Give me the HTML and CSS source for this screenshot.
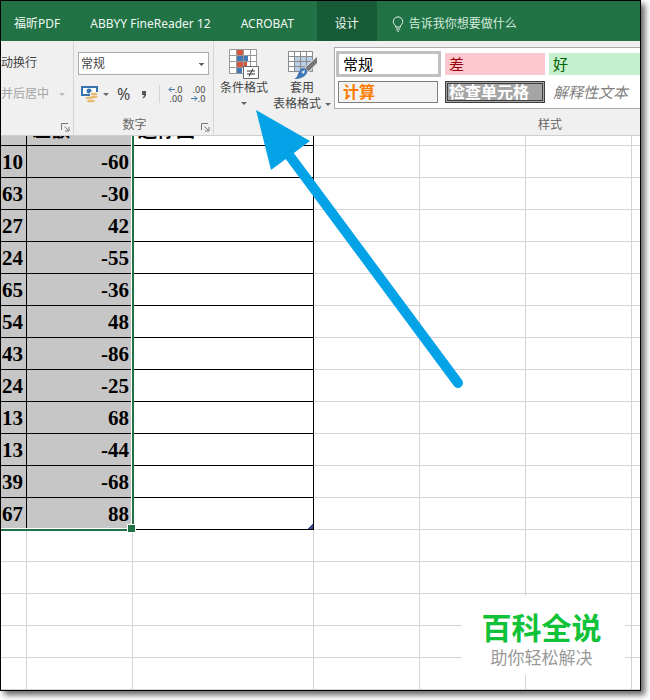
FILE: index.html
```html
<!DOCTYPE html>
<html lang="zh-CN">
<head>
    <meta charset="UTF-8">
    <title>工作簿</title>
    <link rel="stylesheet" href="styles.css">
</head>
<body>
<div class="window">
    <nav class="tabs">
        <a href="#">福昕PDF</a>
        <a href="#">ABBYY FineReader 12</a>
        <a href="#">ACROBAT</a>
        <a href="#" class="active">设计</a>
        <a href="#" class="tell">
            <svg width="12" height="16" viewBox="0 0 12 16" fill="none" stroke="#e6f5ec">
                <path d="M3.500 11V9.500C2 8.500 1.300 7.300 1.300 5.600a4.700 4.700 0 0 1 9.400 0C10.700 7.300 10 8.500 8.500 9.500V11zM3.800 13h4.400M4.800 15h2.400"/>
            </svg>告诉我你想要做什么
        </a>
    </nav>
    <div class="ribbon">
        <section class="group align">
            <button>动换行</button>
            <button class="disabled">并后居中<i class="caret"></i></button>
            <div class="foot"><svg class="launch" viewBox="0 0 9 9"><path d="M.5 7V.5H7M3.500 3.500l4 4M8 4v4H4"/></svg></div>
        </section>
        <section class="group number">
            <select aria-label="数字格式"><option>常规</option></select>
            <div class="tools">
                <button aria-label="会计数字格式">
                    <svg width="18" height="18" viewBox="0 0 18 18">
                        <path d="M1 2h15v8H1z" fill="#fff" stroke="#3a73ad" stroke-width="2"/>
                        <circle cx="8" cy="6" r="2.500" fill="#3a73ad"/>
                        <path d="M9 7h9v10H4v-6h5z" fill="#f0f0f0"/>
                        <g fill="#e9bb72"><ellipse cx="13" cy="9" rx="3.500" ry="1.300"/><ellipse cx="13" cy="12" rx="3.500" ry="1.200"/><ellipse cx="8" cy="13" rx="3.500" ry="1.200"/><ellipse cx="10" cy="16" rx="4" ry="1.300"/></g>
                    </svg><i class="caret"></i>
                </button>
                <button class="percent">%</button>
                <button class="comma" aria-label="千位分隔样式">
                    <svg width="6" height="9" viewBox="0 0 6 9"><path d="M1 1h4v3c0 2-1 3.500-3 4.500L1.500 8C2.500 7 3 6 3 5H1z" fill="#555"/></svg>
                </button>
                <button class="decimal first"><span><svg viewBox="0 0 7 7"><path d="M7 3.500H1M3.500 1L1 3.500 3.500 6"/></svg>.0</span><span>.00</span></button>
                <button class="decimal"><span>.00</span><span><svg viewBox="0 0 7 7"><path d="M0 3.500h6M3.500 1L6 3.500 3.500 6"/></svg>.0</span></button>
            </div>
            <div class="foot">数字<svg class="launch" viewBox="0 0 9 9"><path d="M.5 7V.5H7M3.500 3.500l4 4M8 4v4H4"/></svg></div>
        </section>
        <section class="group styles">
            <div class="row">
                <button class="big">
                    <svg width="32" height="32" viewBox="0 0 32 32">
                        <path d="M1.500 1.500h27v24h-27z" fill="#fff"/>
                        <path d="M9 2h6v5H9zM9 14h10v5H9z" fill="#d2593f"/>
                        <path d="M9 8h11v5H9zM9 20h5v5H9z" fill="#4478b5"/>
                        <path d="M1.500 1.500h27v24h-27zM1.500 7.500h27M1.500 13.500h27M1.500 19.500h27M8.500 1.500v24M15.500 1.500v24M22.500 1.500v24" fill="none" stroke="#999"/>
                        <path d="M15.500 18.500h15v12h-15z" fill="#fff" stroke="#666"/>
                        <path d="M19 23h8M19 26h8M25 20.500l-4 8" stroke="#333" fill="none"/>
                    </svg>
                    <span>条件格式</span><i class="caret"></i>
                </button>
                <button class="big">
                    <svg width="32" height="32" viewBox="0 0 32 32">
                        <path d="M2.500 3.500h24v20h-24z" fill="#fff"/>
                        <path d="M9 9h18v15H9z" fill="#b9cde5"/>
                        <path d="M2.500 3.500h24v20h-24zM2.500 8.500h24M2.500 13.500h24M2.500 18.500h24M8.500 3.500v20M14.500 3.500v20M20.500 3.500v20" fill="none" stroke="#8c8c8c"/>
                        <path d="M31.500 8v7l-9 9-4-4z" fill="#777" stroke="#f0f0f0"/>
                        <path d="M17 20c3 0 5 3 4 5-2 4-7 6-13 6 4-2 3-4 5-7 1-2 2-4 4-4z" fill="#3f78b5"/>
                        <path d="M15 24l4-2-1 4z" fill="#dbe8f5"/>
                    </svg>
                    <span>套用</span><span>表格格式<i class="caret"></i></span>
                </button>
                <div class="gallery">
                    <button class="normal">常规</button>
                    <button class="bad">差</button>
                    <button class="good">好</button>
                    <button class="calc">计算</button>
                    <button class="check">检查单元格</button>
                    <button class="note">解释性文本</button>
                </div>
            </div>
            <div class="foot">样式</div>
        </section>
    </div>
    <div class="sheet">
        <table>
            <colgroup><col class="c1"><col class="c2"><col class="c3"><col class="c2"><col class="c2"><col class="c2"><col></colgroup>
            <tbody class="data">
            <tr><th></th><th>差额</th><th>迷你图</th><td></td><td></td><td></td><td></td></tr>
            <tr><td>10</td><td>-60</td><td></td><td></td><td></td><td></td><td></td></tr>
            <tr><td>63</td><td>-30</td><td></td><td></td><td></td><td></td><td></td></tr>
            <tr><td>27</td><td>42</td><td></td><td></td><td></td><td></td><td></td></tr>
            <tr><td>24</td><td>-55</td><td></td><td></td><td></td><td></td><td></td></tr>
            <tr><td>65</td><td>-36</td><td></td><td></td><td></td><td></td><td></td></tr>
            <tr><td>54</td><td>48</td><td></td><td></td><td></td><td></td><td></td></tr>
            <tr><td>43</td><td>-86</td><td></td><td></td><td></td><td></td><td></td></tr>
            <tr><td>24</td><td>-25</td><td></td><td></td><td></td><td></td><td></td></tr>
            <tr><td>13</td><td>68</td><td></td><td></td><td></td><td></td><td></td></tr>
            <tr><td>13</td><td>-44</td><td></td><td></td><td></td><td></td><td></td></tr>
            <tr><td>39</td><td>-68</td><td></td><td></td><td></td><td></td><td></td></tr>
            <tr><td>67</td><td>88</td><td class="last"></td><td></td><td></td><td></td><td></td></tr>
            </tbody>
            <tbody>
            <tr><td></td><td></td><td></td><td></td><td></td><td></td><td></td></tr>
            <tr><td></td><td></td><td></td><td></td><td></td><td></td><td></td></tr>
            <tr><td></td><td></td><td></td><td></td><td></td><td></td><td></td></tr>
            <tr><td></td><td></td><td></td><td></td><td></td><td></td><td></td></tr>
            <tr><td></td><td></td><td></td><td></td><td></td><td></td><td></td></tr>
            </tbody>
        </table>
        <div class="selection"></div>
        <div class="mark">
            <strong>百科全说</strong>
            <span>助你轻松解决</span>
        </div>
    </div>
    <svg class="arrow" width="210" height="282" viewBox="0 0 210 282">
        <path d="M1 1l54 31-39 29z" fill="#04a2e6"/>
        <path d="M34 46l169 228" stroke="#04a2e6" stroke-width="10" stroke-linecap="round"/>
    </svg>
</div>
</body>
</html>
```
FILE: styles.css
```css
*
{
    box-sizing: border-box;
}
body
{
    margin: 0;
    padding: 0 9px 9px 0;
    background: #fff;
    font: 12px/16px "Noto Sans", "Noto Sans CJK SC", sans-serif;
    color: #444;
}
button
{
    padding: 0;
    border: 0;
    background: none;
    font: inherit;
    color: inherit;
}
.window
{
    position: relative;
    border: 1px solid #000;
    background: #fff;
    box-shadow: 4px 4px 6px rgba(0, 0, 0, .6);
}

/* tabs */
.tabs
{
    display: flex;
    height: 40px;
    background: #217346;
    white-space: nowrap;
    overflow: hidden;
}
.tabs a
{
    display: flex;
    align-items: center;
    padding: 6px 15px 0;
    color: #f0f8f3;
    text-decoration: none;
}
.tabs a:first-child
{
    padding-left: 13px;
}
.tabs .active
{
    padding: 6px 18px 0;
    margin-left: 8px;
    background: #185c37;
}
.tabs .tell
{
    gap: 5px;
    color: #d5eadd;
}

/* ribbon */
.ribbon
{
    display: flex;
    height: 95px;
    overflow: hidden;
    background: #f0f0f0;
    border-bottom: 1px solid #cfcfcf;
    white-space: nowrap;
}
.group
{
    display: flex;
    flex: none;
    flex-direction: column;
    position: relative;
}
.align, .number
{
    border-right: 1px solid #d5d5d5;
}
.align
{
    width: 73px;
    padding-top: 14px;
    align-items: flex-start;
    gap: 15px;
}
.disabled
{
    color: #a5a5a5;
}
.disabled .caret
{
    margin-left: 10px;
    border-top-color: #bbb;
}
.caret
{
    display: inline-block;
    vertical-align: 2px;
    border: 3px solid transparent;
    border-top-color: #666;
    border-bottom: 0;
}
.number
{
    width: 140px;
    padding: 11px 4px 0;
}
.number select
{
    width: 131px;
    height: 23px;
    padding: 0 2px;
    border: 1px solid #ababab;
    border-radius: 0;
    appearance: none;
    background: linear-gradient(#666, #666) 120px 10px / 5px 1px no-repeat, linear-gradient(#666, #666) 121px 11px / 3px 1px no-repeat, linear-gradient(#666, #666) 122px 12px / 1px 1px no-repeat, #fff;
    font: inherit;
    color: #444;
}
.tools
{
    display: flex;
    align-items: center;
    height: 22px;
    margin-top: 8px;
}
.tools button
{
    display: flex;
    align-items: center;
    gap: 4px;
    padding-left: 3px;
}
.tools .percent
{
    padding-left: 8px;
    font-size: 16px;
}
.tools .comma
{
    padding-left: 11px;
}
.tools .decimal
{
    flex-direction: column;
    align-items: flex-end;
    gap: 0;
    width: 23px;
    padding: 0;
    font-size: 9px;
    line-height: 9px;
}
.tools .first
{
    margin-left: 12px;
    border-left: 1px solid #d5d5d5;
}
.decimal span
{
    display: block;
}
.decimal svg
{
    width: 7px;
    height: 7px;
    fill: none;
    stroke: #3a73ad;
}
.foot
{
    position: absolute;
    right: 0;
    bottom: 2px;
    left: 0;
    padding-right: 18px;
    text-align: center;
    color: #666;
}
.launch
{
    position: absolute;
    right: 3px;
    bottom: 1px;
    width: 9px;
    height: 9px;
    fill: none;
    stroke: #777;
}
.styles
{
    width: 690px;
}
.row
{
    display: flex;
    align-items: flex-start;
    padding: 6px 0 0 5px;
}
.big
{
    display: flex;
    flex: none;
    flex-direction: column;
    align-items: center;
    width: 50px;
    padding-top: 1px;
}
.big + .big
{
    width: 60px;
    margin-left: 3px;
}
.big span
{
    line-height: 16px;
}
.big > .caret
{
    margin-top: 6px;
}
.big span .caret
{
    margin-left: 4px;
}
.gallery
{
    display: grid;
    flex: none;
    grid-template-columns: 105px 100px 100px;
    gap: 6px 4px;
    margin-left: 2px;
    padding: 5px 1px;
    border: 1px solid #ababab;
    background: #fff;
    font-size: 15px;
}
.gallery button
{
    height: 22px;
    padding-left: 4px;
    line-height: 18px;
    text-align: left;
}
.gallery .normal
{
    height: 26px;
    margin: -2px 0;
    border: 3px solid #bfbfbf;
    color: #000;
}
.gallery .bad
{
    background: #ffc7ce;
    color: #9c0006;
}
.gallery .good
{
    background: #c6efce;
    color: #006100;
}
.gallery .calc
{
    margin: 0 3px 0 2px;
    border: 1px solid #7f7f7f;
    background: #f2f2f2;
    color: #fa7d00;
    font-size: 16px;
    font-weight: bold;
}
.gallery .check
{
    padding-left: 1px;
    border: 3px double #3f3f3f;
    background: #a5a5a5;
    color: #fff;
    font-size: 16px;
    font-weight: bold;
    line-height: 16px;
}
.gallery .note
{
    color: #7f7f7f;
    font-style: italic;
}

/* sheet, scrolled so that the header row is cut by the ribbon */
.sheet
{
    position: relative;
    overflow: hidden;
}
table
{
    width: 100%;
    margin-top: -22px;
    table-layout: fixed;
    border-collapse: separate;
    border-spacing: 0;
}
.c1
{
    width: 26px;
}
.c2
{
    width: 106px;
}
.c3
{
    width: 181px;
}
td, th
{
    height: 32px;
    padding: 0 3px 0 0;
    border-right: 1px solid #d4d4d4;
    border-bottom: 1px solid #d4d4d4;
    font: bold 21px/24px "Liberation Serif", "Noto Sans CJK SC", serif;
    color: #000;
    text-align: right;
}
tr > :last-child
{
    border-right: 0;
}
th
{
    padding: 2px 0 0 5px;
    font-size: 19px;
    text-align: left;
}
.data tr > :nth-child(-n+3)
{
    border-color: #000;
}
.data tr > :nth-child(-n+2)
{
    background: #c6c6c6;
}
.data .last
{
    background: linear-gradient(135deg, transparent 50%, #3c4a8c 50%) right bottom / 5px 5px no-repeat;
}
.selection
{
    position: absolute;
    top: 0;
    left: 0;
    width: 133px;
    height: 395px;
    border-right: 2px solid #217346;
    border-bottom: 2px solid #217346;
    box-shadow: inset -1px -1px #fff;
}
.selection::after
{
    content: "";
    position: absolute;
    right: -4px;
    bottom: -4px;
    width: 7px;
    height: 7px;
    border: 1px solid #fff;
    background: #217346;
}
.mark
{
    position: absolute;
    right: 15px;
    bottom: 15px;
    width: 163px;
    padding: 13px 4px 6px 0;
    background: #fff;
    text-align: center;
}
.mark strong, .mark span
{
    display: block;
}
.mark strong
{
    font-size: 30px;
    line-height: 38px;
    color: #0fc237;
}
.mark span
{
    font-size: 17px;
    line-height: 22px;
    color: #999;
}
.arrow
{
    position: absolute;
    top: 108px;
    left: 254px;
}
```
